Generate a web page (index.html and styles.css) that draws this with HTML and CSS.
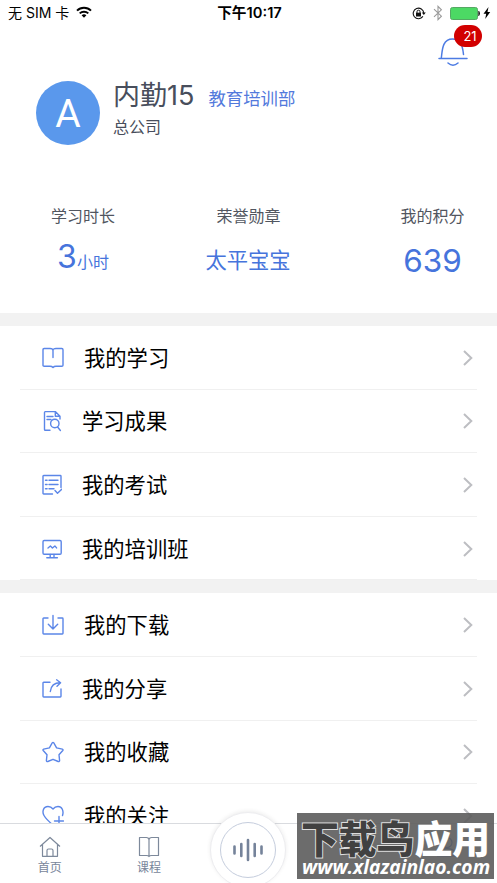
FILE: index.html
```html
<!DOCTYPE html>
<html lang="zh-CN">
<head>
<meta charset="utf-8">
<title>我的</title>
<link rel="stylesheet" href="styles.css">
</head>
<body>
<div class="screen">
  <header class="status">
    <div class="status-left"><span>无 SIM 卡</span>
      <svg width="16" height="12" viewBox="0 0 16 12" fill="none" stroke="#000" stroke-width="2"><path d="M1 4.6a10 10 0 0 1 14 0M3.7 7.4a6.2 6.2 0 0 1 8.6 0"/><path d="M5.6 9.3a3.6 3.6 0 0 1 4.8 0L8 11.8z" fill="#000" stroke="none"/></svg>
    </div>
    <div class="status-time">下午10:17</div>
    <div class="status-right">
      <svg width="14" height="13" viewBox="0 0 14 13" fill="none" stroke="#111"><path d="M10.9 9.4A5.3 5.3 0 1 1 11.8 6" stroke-width="1.1"/><path d="M9.8 5.6h4L11.8 8z" fill="#111" stroke="none"/><path d="M4 5.7h5v3.8H4z" fill="#111" stroke="none"/><path d="M5 6V4.7a1.5 1.5 0 0 1 3 0V6"/></svg>
      <svg class="bt" width="10" height="16" viewBox="0 0 10 16" fill="none" stroke="#999" stroke-width="1.1"><path d="M1 4.2l7.4 7L5 14.6V1.4l3.4 3.4-7.4 7"/></svg>
      <svg class="bat" width="30" height="13" viewBox="0 0 30 13"><rect x=".5" y=".5" width="27" height="12" rx="2" fill="#4cd964" stroke="#55a863"/><path d="M28.3 4.1h.6q1 .4 1 2.400t-1 2.400h-.6z" fill="#111"/></svg>
      <svg width="8" height="12" viewBox="0 0 8 12"><path d="M5.5 0L.5 6.7h2.7L2.2 12l5-7H4.5z" fill="#000"/></svg>
    </div>
  </header>

  <section class="profile">
    <div class="avatar">A</div>
    <div class="who">
      <div class="who-top"><span class="name">内勤15</span><span class="dept">教育培训部</span></div>
      <div class="company">总公司</div>
    </div>
    <div class="bell">
      <svg width="30" height="32" viewBox="0 0 30 32" fill="none" stroke="#4c7be3" stroke-width="1.5" stroke-linecap="round"><path d="M1 23.5h28M3.3 23C4.3 16 4 4 14.5 4c7 0 9.8 4 11 15.5M10 28q5 4.4 10 0"/></svg>
      <span class="badge">21</span>
    </div>
  </section>

  <section class="stats">
    <div class="stat"><div class="stat-label">学习时长</div><div class="stat-value hours"><b>3</b>小时</div></div>
    <div class="stat"><div class="stat-label">荣誉勋章</div><div class="stat-value medal">太平宝宝</div></div>
    <div class="stat points-col"><div class="stat-label">我的积分</div><div class="stat-value points">639</div></div>
  </section>

  <nav class="group">
    <div class="row">
      <svg class="ico" width="22" height="22" viewBox="0 0 22 22"><path d="M2.2 1.5H8q3 0 3 2 0-2 3-2h5.8q1.2 0 1.2 1.2v15.6q0 1-1.2 1H14q-2 0-3 1.2-1-1.2-3-1.2H2.2q-1.2 0-1.2-1V2.7q0-1.2 1.2-1.2zM11 3.5v7"/></svg>
      <span class="label">我的学习</span><svg class="chev" width="10" height="16" viewBox="0 0 10 16"><path d="M1 1l7.3 7L1 15"/></svg>
    </div>
    <div class="row">
      <svg class="ico" width="20" height="22" viewBox="0 0 20 22"><path d="M8 20.3H3.3q-.8 0-.8-.8V2.4q0-.8.8-.8h10L18 6.2V9M13.3 1.6v4.6H18M5 6.5h6M5 9.5h4M15.6 17l2.8 3.5"/><circle cx="12.8" cy="13.5" r="4.2"/></svg>
      <span class="label">学习成果</span><svg class="chev" width="10" height="16" viewBox="0 0 10 16"><path d="M1 1l7.3 7L1 15"/></svg>
    </div>
    <div class="row">
      <svg class="ico" width="20" height="22" viewBox="0 0 20 22"><path d="M10.5 20H1.7q-.7 0-.7-.7V2.2q0-.7.7-.7h16.6q.7 0 .7.7v11.3M3.5 6.2h1.6M7 6.2h9M3.5 10.5h1.6M7 10.5h9M3.5 14.8h1.6M7 14.8h5M13 16.5l2.5 2.8 4.2-4"/></svg>
      <span class="label">我的考试</span><svg class="chev" width="10" height="16" viewBox="0 0 10 16"><path d="M1 1l7.3 7L1 15"/></svg>
    </div>
    <div class="row">
      <svg class="ico" width="20" height="22" viewBox="0 0 20 22"><rect x="1" y="2.5" width="18.2" height="13.8" rx="1.2"/><path d="M6 10l2.4-2 2 2 2.5-2 1.7 1.9M8.2 16.5v3M12 16.5v3M4.8 19.7h10.6"/></svg>
      <span class="label">我的培训班</span><svg class="chev" width="10" height="16" viewBox="0 0 10 16"><path d="M1 1l7.3 7L1 15"/></svg>
    </div>
  </nav>

  <nav class="group second">
    <div class="row">
      <svg class="ico" width="22" height="22" viewBox="0 0 22 22"><path d="M6 4H1.7q-.7 0-.7.7v14.6q0 .7.7.7h18.6q.7 0 .7-.7V4.7q0-.7-.7-.7H16M11 1.5V15M6.3 10.2L11 15l4.7-4.8"/></svg>
      <span class="label">我的下载</span><svg class="chev" width="10" height="16" viewBox="0 0 10 16"><path d="M1 1l7.3 7L1 15"/></svg>
    </div>
    <div class="row">
      <svg class="ico" width="20" height="22" viewBox="0 0 20 22"><path d="M8 4.2H1.7q-.7 0-.7.7v13.4q0 .7.7.7h16.6q.7 0 .7-.7V11M8.3 13.5q1-8.7 10-8.7M14.6 1.8l4 3-3.6 3.4"/></svg>
      <span class="label">我的分享</span><svg class="chev" width="10" height="16" viewBox="0 0 10 16"><path d="M1 1l7.3 7L1 15"/></svg>
    </div>
    <div class="row">
      <svg class="ico" width="22" height="22" viewBox="0 0 22 22"><path d="M10.2 1.9q.8-1 1.6 0l2.8 5 5.7 1.2q1.2.5.5 1.4l-3.8 4.3.6 5.8q-.2 1.3-1.4.9L11 18.3l-5.2 2.2q-1.2.4-1.4-.9l.6-5.8-3.8-4.3q-.7-.9.5-1.4l5.7-1.2z"/></svg>
      <span class="label">我的收藏</span><svg class="chev" width="10" height="16" viewBox="0 0 10 16"><path d="M1 1l7.3 7L1 15"/></svg>
    </div>
    <div class="row">
      <svg class="ico" width="22" height="22" viewBox="0 0 22 22"><path d="M20.500 10.500C22 6 20 1.500 16 1.500Q13 1.500 11 4 9 1.500 6 1.500C1 1.500 0 7 2 10.500 4 14 8 17.500 11 20M17 11.500v9M12.500 16h9"/></svg>
      <span class="label">我的关注</span><svg class="chev" width="10" height="16" viewBox="0 0 10 16"><path d="M1 1l7.3 7L1 15"/></svg>
    </div>
  </nav>

  <footer class="tabs">
    <div class="tab"><svg width="22" height="22" viewBox="0 0 22 22"><path d="M1 10.500L11 1.500l10 9M3.500 8.500v11.800h15V8.500M8 20v-5.500q0-1.500 1.500-1.500h3q1.500 0 1.500 1.500V20"/></svg><span>首页</span></div>
    <div class="tab"><svg width="22" height="22" viewBox="0 0 22 22"><path d="M11 3.500Q10.500 1.500 8.500 1.500H1.500V19.500h7q2 0 2.500 1 .5-1 2.500-1h7V1.500h-7Q11.500 1.500 11 3.500V20"/></svg><span>课程</span></div>
    <div class="voice"><div class="voice-ring"><svg width="32" height="24" viewBox="0 0 32 24"><path d="M2.500 8.500v7M9.300 6v12M16 2v20M22.700 6v12M29.500 8.500v7"/></svg></div></div>
    <div class="tab"></div>
    <div class="tab active"><svg width="22" height="22" viewBox="0 0 22 22"><circle cx="11" cy="6.500" r="5"/><path d="M1.500 20q1-7.500 9.500-7.500t9.500 7.500z"/></svg></div>
  </footer>

  <div class="mark"><div class="mark-name"><span class="mark-dark">下载鸟</span><span>应用</span></div><div class="mark-url">www.xlazainlao.com</div></div>
</div>
</body>
</html>
```
FILE: styles.css
```css
* { box-sizing: border-box; }
body { margin: 0; background: #fff; font-family: Inter, "Noto Sans CJK SC", sans-serif; }
.screen { position: relative; width: 497px; height: 883px; overflow: hidden; background: #fff; }

.status { display: grid; grid-template-columns: 1fr auto 1fr; height: 26px; align-items: center; padding: 0 6px 0 8px; font-size: 14px; line-height: 26px; color: #000; }
.status-left { display: flex; align-items: center; gap: 7px; }
.status-left svg { margin-top: -2px; }
.status-time { font-weight: 600; font-size: 14.700px; }
.status-right { display: flex; align-items: center; justify-content: flex-end; }
.bt { margin-left: 7px; }
.bat { margin: 0 3px 0 7px; }

.profile { position: relative; display: flex; height: 170px; padding: 55px 0 0 36px; }
.avatar { width: 64px; height: 64px; border-radius: 50%; background: #5a98ec; color: #fff; font: 39px/66px Roboto, sans-serif; text-align: center; }
.who { margin-left: 13px; color: #484e5c; }
.who-top { display: flex; align-items: baseline; height: 34px; line-height: 29px; }
.name { font-size: 27px; white-space: nowrap; }
.dept { margin-left: 14px; font-size: 17.400px; color: #5279dc; }
.company { font-size: 16px; line-height: 24px; }
.bell { position: absolute; left: 438px; top: 9px; }
.badge { position: absolute; left: 16px; top: -10px; width: 28px; height: 22px; border-radius: 11px; background: #d20000; color: #fff; font-size: 13px; line-height: 22px; text-align: center; padding-left: 4px; }

.stats { display: grid; grid-template-columns: 166px 165px 166px; height: 117px; padding-top: 8px; text-align: center; }
.points-col { padding-left: 37px; }
.stat-label { font-size: 16px; line-height: 24px; color: #51565f; }
.stat-value { height: 48px; margin-top: 8px; line-height: 48px; color: #4674dc; }
.hours { font-size: 16px; line-height: 42px; }
.hours b { font-size: 32px; font-weight: 400; }
.medal { font-size: 21.300px; padding-right: 1px; }
.points { font-size: 31.500px; line-height: 50px; }

.group { border-top: 13px solid #f2f2f2; }
.row { display: flex; align-items: center; height: 63.600px; margin: 0 20px; padding: 0 4px 0 22px; border-bottom: 1px solid #f0f0f0; }
.ico { margin-top: 1px; fill: none; stroke: #5b86e8; stroke-width: 1.4; stroke-linecap: round; stroke-linejoin: round; }
.label { flex: 1; margin-left: 20px; padding-bottom: 2px; font-size: 21.300px; color: #000; }
.chev { margin-top: 1px; fill: none; stroke: #bdbec2; stroke-width: 2; }

.tabs { position: absolute; left: 0; bottom: 0; width: 497px; height: 60px; background: #fff; border-top: 1px solid #d9dbdf; display: grid; grid-template-columns: repeat(5, 1fr); }
.tab { display: flex; flex-direction: column; align-items: center; padding-top: 12px; font-size: 12px; line-height: 19px; color: #78859a; }
.tab svg { fill: none; stroke: #7d899b; stroke-width: 1.200; stroke-linejoin: round; }
.tab.active svg { stroke: #3f6fe0; }
.voice { width: 76px; height: 76px; margin-top: -12px; justify-self: center; border-radius: 50%; background: #fff; border: 1px solid #ededf0; box-shadow: 0 -1px 4px rgba(0,0,0,.08); padding: 9px; }
.voice-ring { display: flex; align-items: center; justify-content: center; width: 56px; height: 56px; border-radius: 50%; border: 1px solid #c5cddd; }
.voice svg { fill: none; stroke: #75839a; stroke-width: 2.600; stroke-linecap: round; }

.mark { position: absolute; left: 297px; top: 813px; width: 197px; height: 66px; background: rgba(92,92,92,.9); color: #fff; white-space: nowrap; }
.mark-name { display: flex; height: 44px; padding-left: 4px; font: 900 37.800px/46px "Noto Sans CJK SC", sans-serif; line-height: 48px; }
.mark-dark { color: #414141; -webkit-text-stroke: 2px #ddd; paint-order: stroke fill; }
.mark-url { padding-left: 5px; font: italic 700 19.300px/20px "Open Sans", sans-serif; }
```
